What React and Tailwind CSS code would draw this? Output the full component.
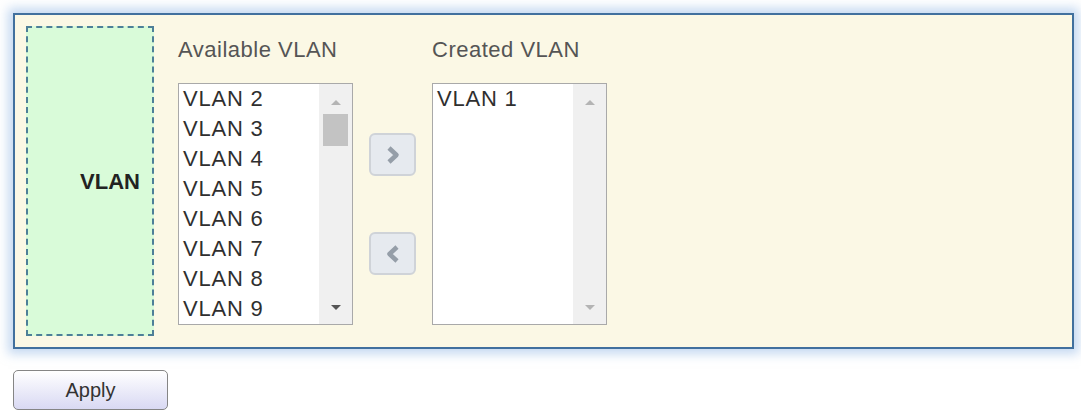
import React from "react";

const available = ["VLAN 2", "VLAN 3", "VLAN 4", "VLAN 5", "VLAN 6", "VLAN 7", "VLAN 8", "VLAN 9"];
const created = ["VLAN 1"];

const Arrow = ({ up, dark }) => (
  <svg width="12" height="7" viewBox="0 0 12 7">
    <path d={up ? "M1 6 L6 1 L11 6 Z" : "M1 1 L6 6 L11 1 Z"} fill={dark ? "#555555" : "#b4b4b4"} />
  </svg>
);

const ListBox = ({ items, thumb }) => (
  <div className="flex w-[175px] h-[242px] border border-[#a9a9a9] bg-white">
    <div className="flex-1 pl-[4px] text-[22px] leading-[30px] tracking-[0.8px] text-[#2f2f2f]">
      {items.map((item) => (
        <div key={item}>{item}</div>
      ))}
    </div>
    <div className="w-[33px] bg-[#f0f0f0] flex flex-col items-center pt-[15px] pb-[13px]">
      <Arrow up />
      {thumb ? <div className="mt-[8px] w-[25px] h-[32px] bg-[#c3c3c3]" /> : null}
      <div className="flex-1" />
      <Arrow dark={thumb} />
    </div>
  </div>
);

const MoveButton = ({ left }) => (
  <button className="w-[47px] h-[43px] rounded-[6px] border-2 border-[#cfd3d8] bg-[#e6eaef] flex items-center justify-center">
    <svg width="14" height="20" viewBox="0 0 14 20">
      <path
        d={left ? "M11 3 L3.5 10 L11 17" : "M3 3 L10.5 10 L3 17"}
        fill="none"
        stroke="#959ea8"
        strokeWidth="4.5"
        strokeLinejoin="round"
      />
    </svg>
  </button>
);

const App = () => {
  return (
    <div className="w-[1081px] h-[418px] bg-white pt-[13px] pl-[13px] font-['Liberation_Sans',Arial,sans-serif]">
      <div className="w-[1061px] h-[336px] border-2 border-[#41709e] bg-[#fbf8e5] shadow-[0_0_10px_5px_rgba(150,185,230,0.55)] p-[11px] flex">
        {/* Label cell */}
        <div className="w-[128px] h-[310px] border-2 border-dashed border-[#4d7f98] bg-[#d9fbd9] flex items-center justify-end pr-[12px]">
          <span className="text-[22px] font-bold text-[#222222]">VLAN</span>
        </div>

        {/* Available */}
        <div className="ml-[24px] flex flex-col">
          <div className="mt-[12px] h-[24px] leading-[24px] text-[22px] tracking-[0.5px] text-[#555555]">Available VLAN</div>
          <div className="mt-[21px]">
            <ListBox items={available} thumb />
          </div>
        </div>

        {/* Move buttons */}
        <div className="w-[79px] flex flex-col items-center pt-[107px]">
          <MoveButton />
          <div className="mt-[56px]">
            <MoveButton left />
          </div>
        </div>

        {/* Created */}
        <div className="flex flex-col">
          <div className="mt-[12px] h-[24px] leading-[24px] text-[22px] tracking-[0.5px] text-[#555555]">Created VLAN</div>
          <div className="mt-[21px]">
            <ListBox items={created} />
          </div>
        </div>
      </div>

      <button className="mt-[21px] w-[155px] h-[40px] rounded-[5px] border border-[#858585] bg-gradient-to-b from-white to-[#d9d9f3] text-[20px] text-[#333333]">
        Apply
      </button>
    </div>
  );
};

export default App;
